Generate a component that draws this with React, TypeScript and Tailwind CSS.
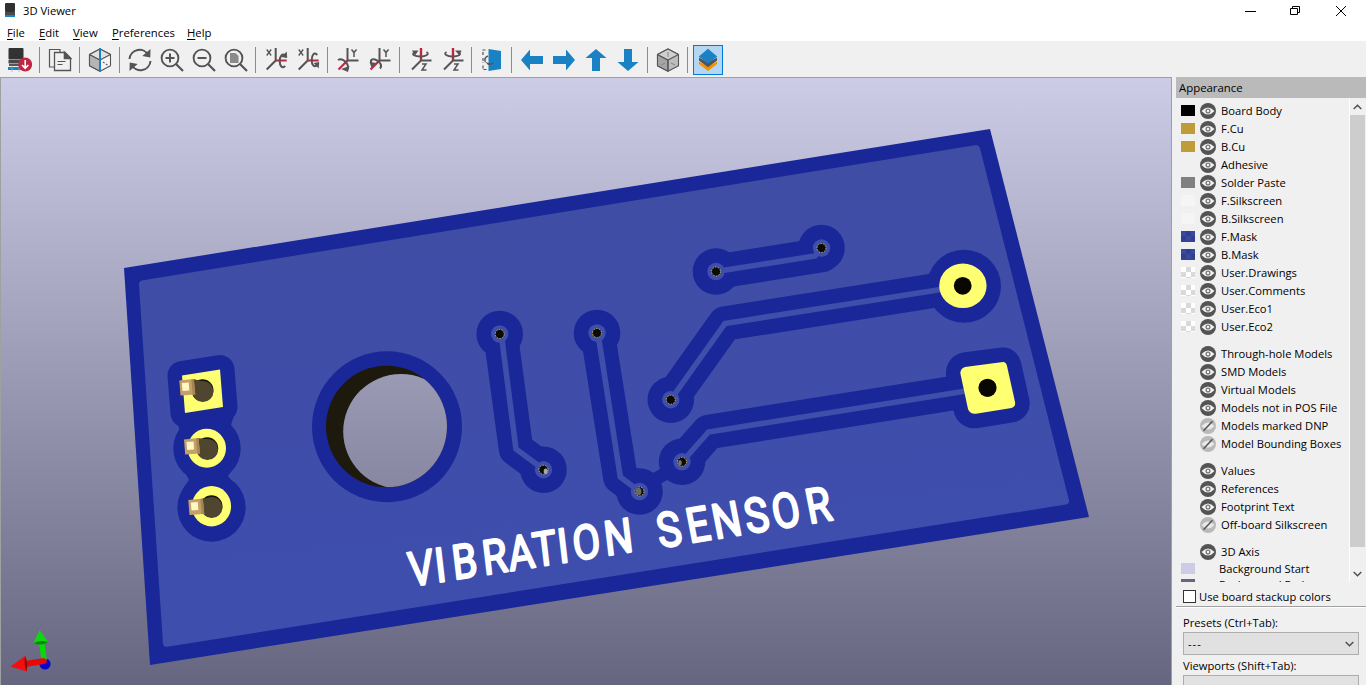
import React from "react";

const G = "#545454";
const RED = "#bf2641";
const BLUE = "#1a81c4";

function Icon({ children }: { children: React.ReactNode }) {
  return (
    <svg width="24" height="24" viewBox="0 0 24 24" fill="none" stroke={G} strokeWidth="1.6">
      {children}
    </svg>
  );
}

function Btn({ children, active }: { children: React.ReactNode; active?: boolean }) {
  return (
    <div className="flex h-[30px] w-8 shrink-0 items-center justify-center">
      <div
        className={
          active
            ? "flex h-[30px] w-[30px] items-center justify-center border border-[#0078d7] bg-[#b3d7f3]"
            : "flex h-[30px] w-[30px] items-center justify-center"
        }
      >
        <Icon>{children}</Icon>
      </div>
    </div>
  );
}

function Sep() {
  return (
    <div className="flex h-[26px] w-2 shrink-0 pl-[3px]">
      <div className="w-px bg-[#8c8c8c]" />
    </div>
  );
}

function ReloadBoard() {
  return (
    <g stroke="none">
      <rect x="0.5" y="0" width="15" height="11.5" rx="1" fill="#333" />
      <path d="M.5 12h15v3.500H.5z" fill="#484848" />
      <path d="M1 16h13v2H1z" fill="#555" />
      <path d="M0 19h14v3H0z" fill={BLUE} />
      <path d="M4 18v6M11 18v6" stroke="#aaa" strokeWidth="0.7" />
      <circle cx="17.200" cy="16.500" r="6.900" fill={RED} />
      <path d="M17.200 12v8M14 17l3.200 3.300 3.200-3.300" stroke="#fff" strokeWidth="1.600" fill="none" />
    </g>
  );
}

function Cube({ split }: { split?: boolean }) {
  return (
    <g strokeWidth="1.100" strokeLinejoin="round">
      <path d="M1.500 6.500 12 1l10.500 5.500v11.200L12 23.200 1.500 17.700z" fill={split ? "#f5f5f5" : "#bdbdbd"} />
      <path d="M1.500 6.500 12 12v11.200L1.500 17.700z" fill={split ? "#b5b5b5" : "#a5a5a5"} />
      <path d="M12 1 1.500 6.500 12 12l10.500-5.500z" fill={split ? "#e2e2e2" : "#d0d0d0"} />
      <path d="M12 12v11" />
      {split ? (
        <>
          <path d="m15 14 5 3.500" strokeDasharray="2 1.500" />
          <path d="M12 0v24" stroke={BLUE} strokeWidth="2" />
        </>
      ) : (
        <path d="M12 4v5M5 17l4-2M15 15l4 2" stroke="#8b8b8b" />
      )}
    </g>
  );
}

function Lens({ children }: { children: React.ReactNode }) {
  return (
    <>
      <circle cx="10" cy="10" r="8.400" strokeWidth="1.900" />
      <path d="m16 16 7 7" strokeWidth="2.200" />
      {children}
    </>
  );
}

function RotX({ flip }: { flip?: boolean }) {
  return (
    <g transform="translate(1.2 0)">
      <path d="M1.500 1.500 6 7.500M6 1.500 1.500 7.500" strokeWidth="1.300" />
      <path d="M10.500 0v12.500L1.500 21.500" strokeWidth="2" />
      <path d="M10.500 12.500h11" stroke={RED} strokeWidth="2" />
      {flip ? (
        <>
          <path d="M20 7c-3-3.500-5.500 0-5.500 5s2.500 7.500 5 5.500" strokeWidth="2" />
          <path d="m16.500 15 5.500-1-.500 6.500z" fill={G} stroke="none" />
        </>
      ) : (
        <>
          <path d="M20 18c-3 3-5.500 0-5.500-5s2.500-7.500 5-6" strokeWidth="2" />
          <path d="m16 9 6 1-.500-6.500z" fill={G} stroke="none" />
        </>
      )}
    </g>
  );
}

function RotY({ flip }: { flip?: boolean }) {
  return (
    <>
      <path d="m15.500 1.500 2.500 3 2.500-3M18 4.500V9" strokeWidth="1.500" />
      <path d="M11.500 0v12.500H22.500" strokeWidth="2" />
      <path d="m11.500 12.500-9 9" stroke={RED} strokeWidth="2.200" />
      {flip ? (
        <>
          <path d="M12 20.500c3-3-1-8-5-9-3-.800-5 .500-3.500 3.500" strokeWidth="2" />
          <path d="m1.500 14 7 1-5 4.500z" fill={G} stroke="none" />
        </>
      ) : (
        <>
          <path d="M2 12c3-2 6 0 8.500 3 2 2.500 2 5.500 0 6.500" strokeWidth="2" />
          <path d="m13.500 18-1.500 6-7-3z" fill={G} stroke="none" />
        </>
      )}
    </>
  );
}

function RotZ({ flip }: { flip?: boolean }) {
  return (
    <g transform="translate(0.5 0)">
      <path d="M12.500 0v12" stroke={RED} strokeWidth="2.400" />
      <path d="M23 12.500H12.500l-9 9" strokeWidth="2" />
      <path d="M13.500 16h4l-4 6h4.500" strokeWidth="1.500" />
      {flip ? (
        <>
          <path d="M6 4c-3.500 2 .5 4.500 6 4.500s10-2 6-4" strokeWidth="1.800" />
          <path d="m14.500 2.500 6.500 0-2 5z" fill={G} stroke="none" />
        </>
      ) : (
        <>
          <path d="M18 4c3.500 2-.5 4.500-6 4.500s-10-2-6-4" strokeWidth="1.800" />
          <path d="m10 2.500-6.500 0 3 5z" fill={G} stroke="none" />
        </>
      )}
    </g>
  );
}

function Arrow({ angle }: { angle: number }) {
  return (
    <path
      transform={`rotate(${angle} 12 12)`}
      d="M1 12 10 1.500V8h13v8H10v6.500z"
      fill={BLUE}
      stroke="none"
    />
  );
}

function Toolbar() {
  return (
    <div className="flex h-9 shrink-0 items-center bg-[#f0f0f0] pt-[2px] pl-1">
      <Btn><ReloadBoard /></Btn>
      <Sep />
      <Btn>
        <path d="M12 5V1.500H1.500v17.500H6" strokeWidth="1.200" />
        <path d="M6.500 4.500H17l5.500 5.500v12.500h-16z" strokeWidth="1.300" />
        <path d="M16.500 4.500v6h6z" fill={G} />
        <path d="M9.500 13.500h8M9.500 16.500h5" strokeWidth="1.200" />
      </Btn>
      <Sep />
      <Btn><Cube split /></Btn>
      <Sep />
      <Btn>
        <path d="M1.500 11A10 10 0 0 1 20.500 7.500M22.500 13A10 10 0 0 1 3.500 16.500" strokeWidth="2" />
        <path d="m22.500 1-.200 8.500-8-1.500zM1.500 23l.200-8.500 8 1.500z" fill={G} stroke="none" />
      </Btn>
      <Btn><Lens><path d="M10 5.500v9M5.500 10h9" strokeWidth="2" /></Lens></Btn>
      <Btn><Lens><path d="M5.500 10h9" strokeWidth="2" /></Lens></Btn>
      <Btn><Lens><path d="M6 5h5.500L14.500 8v7H6z" fill="#8a8a8a" stroke="none" /></Lens></Btn>
      <Sep />
      <Btn><RotX /></Btn>
      <Btn><RotX flip /></Btn>
      <Sep />
      <Btn><RotY /></Btn>
      <Btn><RotY flip /></Btn>
      <Sep />
      <Btn><RotZ /></Btn>
      <Btn><RotZ flip /></Btn>
      <Sep />
      <Btn>
        <path d="M3 7V2h4M3 10v5M3 17.500V21.500h4" strokeWidth="1.200" strokeDasharray="3 1.500" />
        <path d="M8.500 1 21 3v18L8.500 23z" fill={BLUE} stroke="none" />
        <path d="M8 8C5 9 4 12 5.500 14" strokeWidth="1.500" />
        <path d="M5 13.500Q9 16.500 14.500 14.500 12 17.500 8 17z" fill={G} stroke="none" />
      </Btn>
      <Sep />
      <Btn><Arrow angle={0} /></Btn>
      <Btn><Arrow angle={180} /></Btn>
      <Btn><Arrow angle={90} /></Btn>
      <Btn><Arrow angle={270} /></Btn>
      <Sep />
      <Btn><Cube /></Btn>
      <Sep />
      <Btn active>
        <g stroke="none">
          <path d="m3 13.500 9 5 9-5v2.500L12 23l-9-7z" fill="#f39200" />
          <path d="m3 9.500 9 5 9-5v3L12 19.200l-9-6.700z" fill="#545454" />
          <path d="m12 .800 9.200 7.800L12 15.600 2.800 8.600z" fill={BLUE} />
        </g>
      </Btn>
    </div>
  );
}

const DARK = "#1a2799";
const COPPER = "#3f4eab";

const TRACKS = [
  "M502 340 516 449 543 469",
  "M599 340 620.300 477 639 491",
  "M716 271.500 815 256 821 249",
  "M670.500 400 725 323.500 960 286.500",
  "M682 462 708.500 432 985 388",
];

const DARK_TRACKS = [
  "M502 345 516 449 543 469",
  "M599.500 345 620.300 477 639 491",
  "M720 271.300 822 255",
  "M670.500 400 725 323.500 960 286.500",
  "M682 462 708.500 432 985 388",
];

const VIAS: [number, number][] = [
  [499.700, 334], [543.500, 469.700], [597, 333], [639.500, 491.500],
  [716, 271.500], [821.500, 248], [670.800, 399.700], [682, 461.800],
];

const PAD_SQ = "M182 375.500 220 369.500 223 407 185 413z";
const PAD_R = "M965 367 1003 362Q1006 362 1007 366L1015 402Q1016 406.500 1011.500 408L976 413.700Q970 414.500 968 409L960.500 374Q960 368.500 965 367z";

// Each word is sheared to follow the board's perspective; centers are board x positions.
const LEGEND = [
  {
    word: "VIBRATION",
    y: 584.8,
    rise: -0.1585,
    lean: 0.115,
    centers: [423, 442.2, 466.500, 496.500, 523, 546.700, 565, 588.300, 620.300],
  },
  {
    word: "SENSOR",
    y: 546,
    rise: -0.163,
    lean: 0.19,
    centers: [672, 701, 729.800, 759.500, 789, 821.500],
  },
];
const SQUEEZE = 0.83;

function Pin({ x, y, dy = 0 }: { x: number; y: number; dy?: number }) {
  return (
    <g transform={`translate(${x} ${y})`}>
      <circle cx="23.200" cy={11.200 + dy} r="11" fill="#17140b" />
      <circle cx="23.500" cy={12.500 + dy} r="10.600" fill="#50452f" />
      <path d={`M14-.500 24 ${2.500 + dy} 23 ${22.800 + dy} 15.500 15z`} fill="#50452f" />
      <path d="M0 1 14.500-.500 16 15 1.200 16z" fill="#c4a069" />
      <path d="M12 0 14.500-.500 16 15 13.500 15z" fill="#a58452" />
      <path d="M2.500 3.500 9.500 3 10 11 3.200 11.500z" fill="#fff7c4" />
    </g>
  );
}

function Board() {
  return (
    <svg className="block" width="1170" height="607" viewBox="1 78 1170 607">
      <defs>
        <linearGradient id="sky" gradientUnits="userSpaceOnUse" x1="0" y1="78" x2="0" y2="685">
          <stop offset="0" stopColor="#cccce6" />
          <stop offset="1" stopColor="#666680" />
        </linearGradient>
        <linearGradient id="mask" gradientUnits="userSpaceOnUse" x1="500" y1="200" x2="540" y2="600">
          <stop offset="0" stopColor="#404da5" />
          <stop offset="1" stopColor="#3e4ead" />
        </linearGradient>
        <clipPath id="drill"><ellipse cx="386.500" cy="426.500" rx="60.500" ry="60.800" /></clipPath>
      </defs>
      <rect x="0" y="78" width="1172" height="607" fill="url(#sky)" />
      <path d="M124 268 990 129 1089 517 150 665z" fill={DARK} />
      <path
        d="M143 280.300 975 145.300Q979 144.700 980 148.500L1069 500.500Q1069.500 503.500 1066 504.500L167 646.800Q163.500 647.300 163 643.500L139 284.500Q138.800 281 143 280.300z"
        fill="url(#mask)"
      />
      <g fill="none" stroke={DARK} strokeWidth="34.500" strokeLinejoin="round" strokeLinecap="round">
        {DARK_TRACKS.map((d) => <path key={d} d={d} />)}
        <path d="M645 485 675 468" strokeWidth="13" />
      </g>
      <g fill={DARK}>
        {VIAS.map(([x, y]) => <circle key={x} cx={x} cy={y} r="23.300" />)}
        <ellipse cx="964" cy="286.300" rx="37" ry="36.500" />
        <path d={PAD_R} stroke={DARK} strokeWidth="29" strokeLinejoin="round" />
        <path d={PAD_SQ} stroke={DARK} strokeWidth="29" strokeLinejoin="round" />
        <path d="M177 420 235 412 228 435 181 436zM186 474 232 470 228 476 236 487 184 487 189 480z" />
        <circle cx="207" cy="448.500" r="33.700" />
        <circle cx="211.500" cy="507.500" r="34.200" />
        <ellipse cx="387" cy="426.800" rx="75" ry="75.500" />
      </g>
      <g fill="none" stroke={COPPER} strokeWidth="5.600" strokeLinejoin="miter">
        {TRACKS.map((d) => <path key={d} d={d} />)}
      </g>
      {VIAS.map(([x, y], i) => (
        <g key={x}>
          <circle cx={x} cy={y} r="8.700" fill={COPPER} />
          <circle cx={x} cy={y} r="4.500" fill="#0c0a03" stroke="#c9c46a" strokeWidth="0.900" strokeDasharray="1.500 1.300" />
          {i === 1 && <ellipse cx={x + 2.200} cy={y + 1.500} rx="2" ry="2.800" fill="#a9a6b0" />}
          {i === 3 && <ellipse cx={x - 1} cy={y} rx="3" ry="3.700" fill="#6a6768" />}
          {i === 7 && <ellipse cx={x - 2} cy={y + 1} rx="1.800" ry="2.700" fill="#77747a" />}
        </g>
      ))}

      <ellipse cx="386.500" cy="426.500" rx="60.500" ry="60.800" fill="#1d190d" />
      <ellipse cx="401" cy="431.500" rx="57.800" ry="57.500" fill="url(#sky)" clipPath="url(#drill)" />

      <g fill="#ffff72">
        <path d={PAD_SQ} />
        <ellipse cx="206.800" cy="448.300" rx="19.200" ry="19.500" />
        <ellipse cx="211.500" cy="506.200" rx="19.600" ry="20.200" />
        <ellipse cx="962.900" cy="285.800" rx="23.700" ry="22.300" />
        <path d={PAD_R} />
      </g>
      <circle cx="962.700" cy="285.800" r="8.900" fill="#080700" />
      <circle cx="987.500" cy="387.800" r="9.100" fill="#080700" />
      <Pin x={179.300} y={379.500} dy={-0.5} />
      <Pin x={184} y={438.500} dy={-1.5} />
      <Pin x={188.300} y={499} dy={-4} />

      {LEGEND.map(({ word, y, rise, lean, centers }) => (
        <text
          key={word}
          transform={`matrix(${SQUEEZE} ${rise * SQUEEZE} ${lean} 0.985 ${centers[0]} ${y})`}
          x={centers.map((c) => (c - centers[0]) / SQUEEZE).join(" ")}
          fill="#fff"
          stroke="#fff"
          strokeWidth="2.200"
          strokeLinejoin="round"
          textAnchor="middle"
          fontSize="48"
          fontFamily="Roboto, sans-serif"
        >
          {word}
        </text>
      ))}

      <circle cx="45" cy="664" r="5.600" fill="#0808c8" />
      <path d="M39 643 41.500 661 46.800 660 44.500 643z" fill="#08d808" />
      <path d="M39.500 630 33.700 643Q41 647 48.300 642z" fill="#10d810" />
      <path d="M33.700 643Q41 639.500 48.300 642 41 646.500 33.700 643z" fill="#078807" />
      <path d="M25 661 44 658Q48.500 660.500 46 663.500L26 667z" fill="#e80808" />
      <path d="M10.500 666.500 25 656Q28.500 663 26.700 671.500z" fill="#f01010" />
      <path d="M25 656Q28.500 663 26.700 671.500 23.500 664 25 656z" fill="#8c0a0a" />
    </svg>
  );
}

function Eye({ off }: { off?: boolean }) {
  return (
    <svg className="shrink-0" width="16" height="16" viewBox="0 0 16 16">
      <circle cx="8" cy="8" r="8" fill={off ? "#b9b9b9" : "#545454"} />
      <path d="M1.500 8Q8 .800 14.500 8 8 15.200 1.500 8z" fill={off ? "#e9e9e9" : "#f3f3f3"} />
      {off ? (
        <path d="M3.500 12.800 12.500 3.200" stroke="#545454" strokeWidth="1.500" />
      ) : (
        <circle cx="8" cy="8" r="1.900" fill="#f3f3f3" stroke="#777" strokeWidth="1.300" />
      )}
    </svg>
  );
}

type Row = { label: string; swatch?: string; off?: boolean };

const CHECKER =
  "bg-[#fff] bg-[conic-gradient(#d9d9d9_25%,#fff_0_50%,#d9d9d9_0_75%,#fff_0)] bg-[length:10px_10px]";
const MASK =
  "bg-[conic-gradient(#303f8f_25%,#3a499b_0_50%,#303f8f_0_75%,#3a499b_0)] bg-[length:10px_10px]";

const GROUPS: Row[][] = [
  [
    { label: "Board Body", swatch: "bg-black" },
    { label: "F.Cu", swatch: "bg-[#bf9b3a]" },
    { label: "B.Cu", swatch: "bg-[#bf9b3a]" },
    { label: "Adhesive" },
    { label: "Solder Paste", swatch: "bg-[#808080]" },
    { label: "F.Silkscreen", swatch: "bg-[#f5f5f5]" },
    { label: "B.Silkscreen", swatch: "bg-[#f5f5f5]" },
    { label: "F.Mask", swatch: MASK },
    { label: "B.Mask", swatch: MASK },
    { label: "User.Drawings", swatch: CHECKER },
    { label: "User.Comments", swatch: CHECKER },
    { label: "User.Eco1", swatch: CHECKER },
    { label: "User.Eco2", swatch: CHECKER },
  ],
  [
    { label: "Through-hole Models" },
    { label: "SMD Models" },
    { label: "Virtual Models" },
    { label: "Models not in POS File" },
    { label: "Models marked DNP", off: true },
    { label: "Model Bounding Boxes", off: true },
  ],
  [
    { label: "Values" },
    { label: "References" },
    { label: "Footprint Text" },
    { label: "Off-board Silkscreen", off: true },
  ],
  [{ label: "3D Axis" }],
];

function Chevron({ up }: { up?: boolean }) {
  return (
    <svg width="9" height="6" viewBox="0 0 9 6" fill="none" stroke="#505050" strokeWidth="1.500">
      <path d={up ? "M.700 5 4.500 1.200 8.300 5" : "M.700 1 4.500 4.800 8.300 1"} />
    </svg>
  );
}

function Appearance() {
  return (
    <div className="flex w-[190px] shrink-0 flex-col overflow-hidden bg-[#f0f0f0] text-[11.2px] leading-[18px]">
      <div className="h-[21px] shrink-0 bg-[#bababa] pl-[3px] text-[11.4px] leading-[21px]">Appearance</div>
      <div className="flex h-[484px] shrink-0">
        <div className="flex w-[173px] flex-col overflow-hidden pt-1 whitespace-nowrap">
          {GROUPS.map((rows, g) => (
            <div key={g} className={g < 3 ? "mb-[9px] shrink-0" : "shrink-0"}>
              {rows.map((r) => (
                <div key={r.label} className="flex h-[18px] items-center pl-[5px]">
                  <div className={`mr-[5px] mb-[1px] h-[11px] w-[14px] shrink-0 ${r.swatch ?? ""}`} />
                  <Eye off={r.off} />
                  <span className="ml-[5px]">{r.label}</span>
                </div>
              ))}
            </div>
          ))}
          <div className="-mt-px flex h-[17px] shrink-0 items-center pl-[5px]">
            <div className="mr-6 h-[11px] w-[14px] bg-[#cccce6]" />
            Background Start
          </div>
          <div className="-mt-px flex h-[17px] shrink-0 items-center pl-[5px]">
            <div className="mr-6 h-[11px] w-[14px] bg-[#666680]" />
            Background End
          </div>
        </div>
        <div className="flex w-4 flex-col border-l border-white">
          <div className="flex h-[17px] items-center justify-center"><Chevron up /></div>
          <div className="h-[432px] bg-[#cdcdcd]" />
          <div className="flex grow items-center justify-center pt-[18px]"><Chevron /></div>
        </div>
      </div>
      <div className="flex h-[25px] shrink-0 items-center border-b border-[#a0a0a0] pt-[5px] pl-[7px]">
        <div className="mr-[3px] h-[13px] w-[13px] border border-[#333] bg-white" />
        <span>Use board stackup colors</span>
      </div>
      <div className="flex flex-col border-t border-white pr-[7px] pl-[7px]">
        <div className="mt-[6px] h-[18px]">Presets (Ctrl+Tab):</div>
        <div className="flex h-[23px] shrink-0 items-center justify-between border border-[#adadad] bg-[#e1e1e1] pr-1 pl-1">
          <span className="tracking-[1px]">---</span>
          <Chevron />
        </div>
        <div className="mt-[2px] h-[18px] shrink-0">Viewports (Shift+Tab):</div>
        <div className="h-[23px] shrink-0 border border-[#adadad] bg-[#e1e1e1]" />
      </div>
    </div>
  );
}

function MenuItem({ label }: { label: string }) {
  return (
    <span>
      <span className="underline underline-offset-2">{label[0]}</span>
      {label.slice(1)}
    </span>
  );
}

export default function App() {
  return (
    <div className="flex h-[685px] w-[1366px] flex-col overflow-hidden bg-white font-['Open_Sans','Noto_Sans',sans-serif] text-black">
      <div className="flex h-[23px] shrink-0 items-center justify-between pl-[5px] text-[11.2px]">
        <div className="flex items-center gap-2">
          <svg className="-mt-[2px]" width="10" height="14" viewBox="0 0 10 14">
            <rect width="10" height="9" rx="1" fill="#303030" />
            <path d="M0 9h10v3H0z" fill="#4a4a4a" />
            <path d="M0 12h10v2H0z" fill={BLUE} />
          </svg>
          <span>3D Viewer</span>
        </div>
        <svg className="-mt-[2px]" width="121" height="22" viewBox="0 0 121 22" fill="none" stroke="#000" strokeWidth="1">
          <path d="M0 11.500h11" />
          <path d="M45.500 8.500h7v6h-7zM47.500 8.500v-2h7v6h-2" />
          <path d="m91 6 10 10M101 6 91 16" />
        </svg>
      </div>
      <div className="flex h-[18px] shrink-0 items-center pt-[3px] pl-[7px] text-[11.3px]">
        <div className="w-8"><MenuItem label="File" /></div>
        <div className="w-[34px]"><MenuItem label="Edit" /></div>
        <div className="w-[39px]"><MenuItem label="View" /></div>
        <div className="w-[75px]"><MenuItem label="Preferences" /></div>
        <MenuItem label="Help" />
      </div>
      <Toolbar />
      <div className="flex h-[608px] shrink-0 bg-[#f0f0f0]">
        <div className="mr-1 w-[1172px] shrink-0 border-t border-r border-l border-[#a0a0a0]">
          <Board />
        </div>
        <Appearance />
      </div>
    </div>
  );
}
